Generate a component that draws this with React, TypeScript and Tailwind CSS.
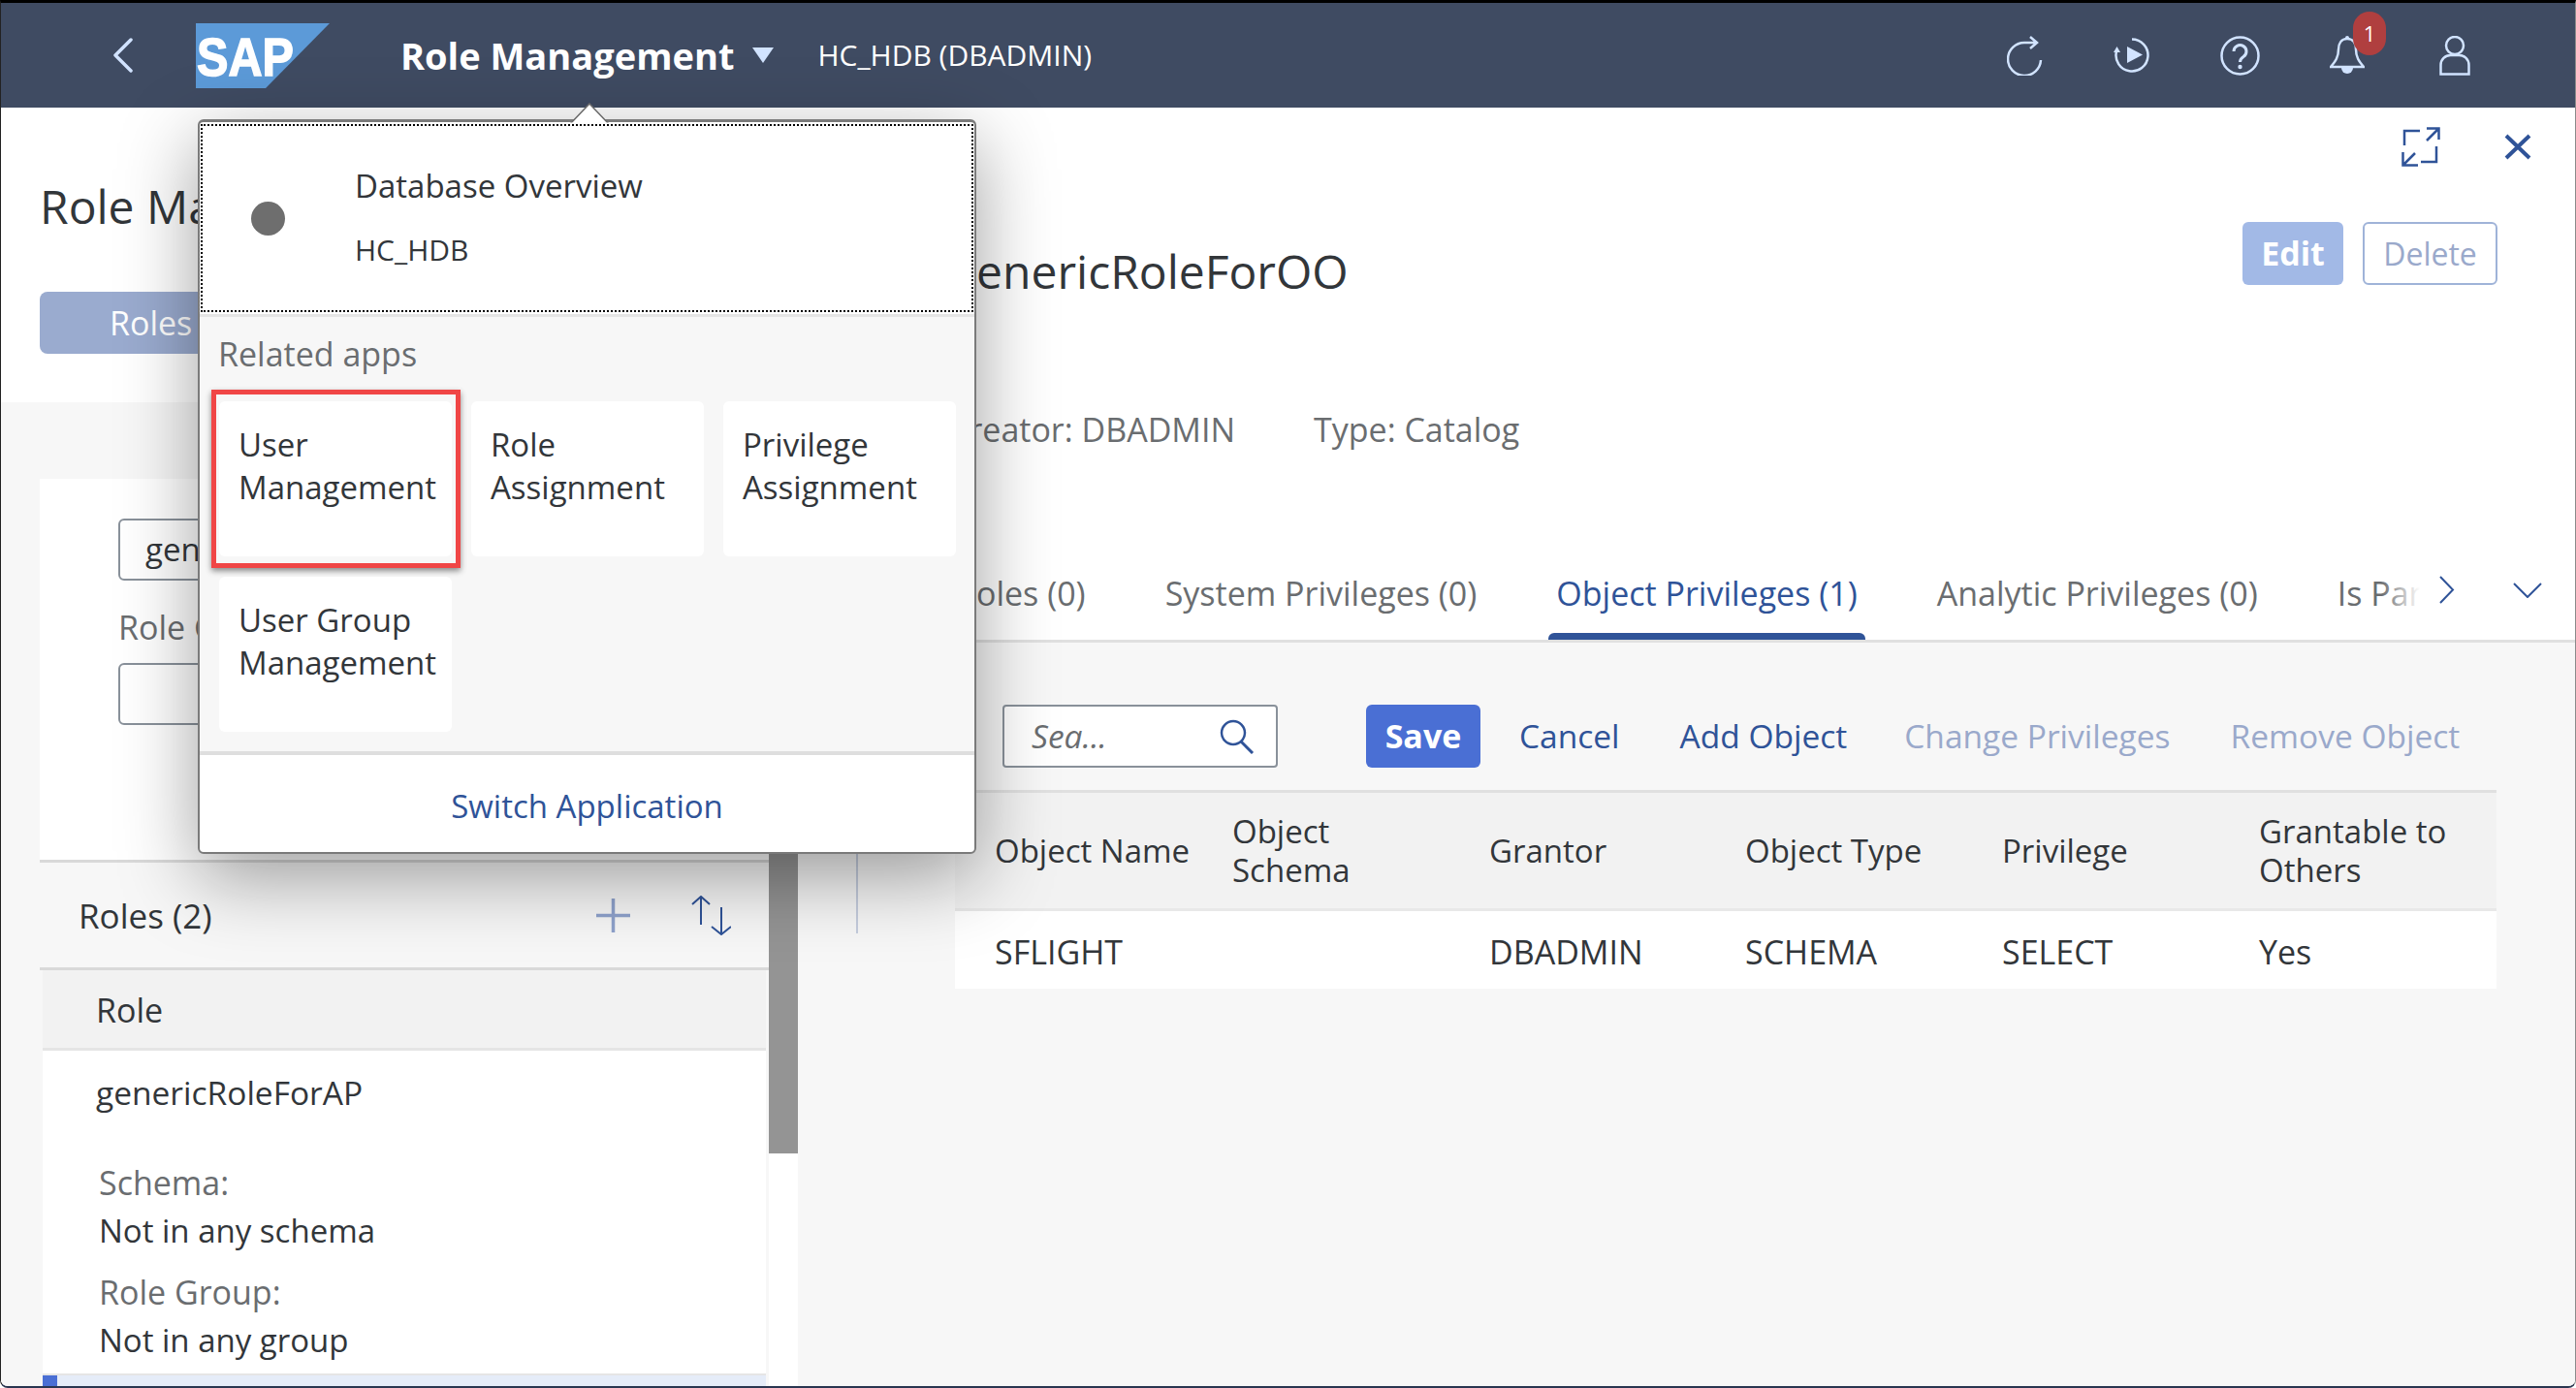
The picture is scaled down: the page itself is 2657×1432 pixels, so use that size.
const iconLight = "#d1e3ff";
const blue = "#2f5398";

const HeaderIcons = () => (
  <div className="flex items-center ml-auto mr-[108px] gap-[72px]">
    <svg width="38" height="41" viewBox="0 0 38 41" fill="none" stroke={iconLight} strokeWidth="2.5">
      <path d="M35 25A17 17 0 1 1 18 7H30M24 1l7 6-7 6" />
    </svg>
    <svg width="38" height="36" viewBox="0 0 38 36" fill="none" stroke={iconLight} strokeWidth="2.5">
      <path d="M19 1.5A16.5 16.5 0 1 1 3 14" />
      <path d="M3.500 9L0 15h7z" fill={iconLight} stroke="none" />
      <path d="M14 9l16 8.500L14 26z" fill={iconLight} stroke="none" />
    </svg>
    <svg width="41" height="41" viewBox="0 0 41 41" fill="none" stroke={iconLight} strokeWidth="2.5">
      <circle cx="20.500" cy="20.500" r="19" />
      <path d="M14 16a6.500 6.500 0 1 1 10 5.500c-2.300 1.500-3.500 2.500-3.500 5.500" strokeWidth="3" />
      <circle cx="20.500" cy="32" r="2.200" fill={iconLight} stroke="none" />
    </svg>
    <div className="relative">
      <svg width="36" height="41" viewBox="0 0 36 41" fill="none" stroke={iconLight} strokeWidth="2.500" className="block">
        <path d="M18 3c-6 0-9 5-9 11 0 8-3 12-8 18h34c-5-6-8-10-8-18 0-6-3-11-9-11z" />
        <circle cx="18" cy="2" r="2" fill={iconLight} stroke="none" />
        <path d="M12 33h12a6 6 0 0 1-12 0z" fill={iconLight} stroke="none" />
      </svg>
      <span className="absolute left-[24px] top-[-25px] flex h-[45px] w-[34px] items-center justify-center rounded-full bg-[#b03f3f] text-[22px] text-white">
        1
      </span>
    </div>
    <svg width="32" height="41" viewBox="0 0 32 41" fill="none" stroke={iconLight} strokeWidth="2.500" className="ml-[5px]">
      <circle cx="16" cy="10" r="9" />
      <path d="M1.500 39.500V30a10 10 0 0 1 10-10h9a10 10 0 0 1 10 10v9.500z" />
    </svg>
  </div>
);

const Header = () => (
  <header className="flex h-[108px] shrink-0 items-center bg-[#3f4b62] pl-[115px]">
    <svg width="22" height="36" viewBox="0 0 22 36" fill="none" stroke={iconLight} strokeWidth="3.500" strokeLinecap="round" strokeLinejoin="round">
      <path d="M19 2L3 18l16 16" />
    </svg>
    <svg width="138" height="67" viewBox="0 0 138 67" className="ml-[64px]">
      <path d="M0 0H138L72 67H0z" fill="#5c9ad8" />
      <text x="1" y="54" fontSize="56" fontWeight="700" fill="#fff" textLength="100" lengthAdjust="spacingAndGlyphs" stroke="#fff" strokeWidth="1.500" fontFamily="'Liberation Sans', sans-serif">
        SAP
      </text>
    </svg>
    <span className="ml-[73px] text-[38px] font-bold leading-none text-white">Role Management</span>
    <svg width="22" height="16" viewBox="0 0 22 16" className="ml-[19px]">
      <path d="M0 0H22L11 16z" fill={iconLight} />
    </svg>
    <span className="ml-[45px] text-[30px] leading-none text-white">HC_HDB (DBADMIN)</span>
    <HeaderIcons />
  </header>
);

const LeftColumn = () => (
  <div className="flex w-[822px] shrink-0 flex-col">
    <div className="h-[304px] shrink-0 bg-white pl-[40px]">
      <h1 className="pt-[76px] text-[48px] leading-[52px] whitespace-nowrap">Role Management</h1>
      <div className="mt-[62px] flex h-[64px] w-[300px] items-center rounded-l-lg bg-[#9aabcf] pl-[72px] text-[34px] text-white">
        Roles
      </div>
    </div>
    <div className="flex flex-1 bg-[#f7f7f7] pl-[40px] pt-[79px]">
      <div className="flex w-[752px] shrink-0 flex-col">
        <div className="h-[396px] shrink-0 border-b-[3px] border-[#d9d9d9] bg-white pl-[81px] pt-[41px]">
          <div className="flex h-[64px] w-[600px] items-center rounded-md border-2 border-[#89919a] pl-[26px] text-[33px]">
            genericRole
          </div>
          <div className="mt-[26px] h-[44px] text-[34px] leading-[44px] text-[#6a6d70]">Role Group</div>
          <div className="mt-[15px] h-[64px] w-[600px] rounded-md border-2 border-[#89919a]" />
        </div>
        <div className="flex h-[111px] shrink-0 items-center border-b-[3px] border-[#d9d9d9] pl-[40px] pr-[39px] text-[35px]">
          <span className="pt-[3px]">Roles (2)</span>
          <svg width="35" height="35" viewBox="0 0 35 35" fill="none" stroke="#8fa2cc" strokeWidth="3.500" className="ml-auto">
            <path d="M17.500 0V35M0 17.500H35" />
          </svg>
          <svg width="41" height="41" viewBox="0 0 41 41" fill="none" stroke={blue} strokeWidth="2" className="ml-[63px]">
            <path d="M10 1V30M1 9l9-8 9 8M31 12V40M21 32l10 8 10-8" />
          </svg>
        </div>
        <div className="mx-[3px] flex-1 bg-white">
          <div className="flex h-[83px] items-center border-b-[3px] border-[#e5e5e5] bg-[#f2f2f2] pl-[55px] pt-[3px] text-[34px]">
            Role
          </div>
          <div className="h-[333px] pl-[55px] pt-[21px] text-[33px] leading-[44px]">
            <div className="text-[33.5px]">genericRoleForAP</div>
            <div className="pl-[3px] pt-[49px] text-[34px] text-[#6a6d70]">Schema:</div>
            <div className="pl-[3px] pt-[6px]">Not in any schema</div>
            <div className="pl-[3px] pt-[19px] text-[34px] text-[#6a6d70]">Role Group:</div>
            <div className="pl-[3px] pt-[6px]">Not in any group</div>
          </div>
          <div className="flex h-[20px] border-t-2 border-[#e5e5e5] bg-[#e5ecf8]">
            <div className="w-[15px] bg-[#4a6fd4]" />
          </div>
        </div>
      </div>
      <div className="w-[30px] shrink-0 bg-white">
        <div className="h-[696px] bg-[#949494]" />
      </div>
    </div>
  </div>
);

const Splitter = () => (
  <div className="flex w-[141px] shrink-0 flex-col">
    <div className="h-[304px] bg-white" />
    <div className="flex-1 bg-[#f7f7f7] pl-[60px]">
      <div className="h-[548px] w-[2px] bg-[#c5cdde]" />
    </div>
  </div>
);

const Tab = ({ label, active }: { label: string; active?: boolean }) => (
  <div className="flex h-full flex-col items-stretch whitespace-nowrap">
    <div className={`flex flex-1 items-center px-[8px] pt-[6px] ${active ? "text-[#2f5398]" : "text-[#6a6d70]"}`}>{label}</div>
    <div className={`h-[7px] rounded-t-md ${active ? "bg-[#2f5398]" : ""}`} />
  </div>
);

const RightHeader = () => (
  <div className="flex h-[552px] shrink-0 flex-col bg-white pl-[17px]">
    <div className="flex h-[118px] shrink-0 items-start justify-end pr-[45px] pt-[20px]">
      <svg width="40" height="41" viewBox="0 0 40 41" fill="none" stroke={blue} strokeWidth="2.500">
        <path d="M3 19V4h16M26 14L38 2M26 1.500h12.500V13M36 20v16H20M14 27L2 39M1.500 26v13.500H17" />
      </svg>
      <svg width="28" height="27" viewBox="0 0 28 27" fill="none" stroke={blue} strokeWidth="4" className="ml-[66px] mt-[7px]">
        <path d="M2 2l24 23M26 2L2 25" />
      </svg>
    </div>
    <div className="flex h-[65px] shrink-0 items-start pr-[80px]">
      <div className="mt-[18px] text-[48px] leading-[66px] whitespace-nowrap">genericRoleForOO</div>
      <button className="ml-auto flex h-[65px] w-[104px] items-center justify-center rounded-md bg-[#a2b9e6] text-[34px] font-bold text-white">
        Edit
      </button>
      <button className="ml-[20px] flex h-[65px] w-[139px] items-center justify-center rounded-md border-2 border-[#9fb3d8] text-[32px] text-[#9aa9cb]">
        Delete
      </button>
    </div>
    <div className="mt-[126px] -ml-[3px] flex h-[46px] shrink-0 items-center text-[34px] text-[#6a6d70]">
      <span>Creator: DBADMIN</span>
      <span className="ml-[81px]">Type: Catalog</span>
    </div>
    <div className="mt-[99px] flex h-[98px] shrink-0 items-stretch overflow-hidden border-b-[3px] border-[#e0e0e0] text-[34px]">
      <div className="relative -ml-[3px] flex w-[1518px] shrink-0 gap-[66px] overflow-hidden">
        <Tab label="Roles (0)" />
        <Tab label="System Privileges (0)" />
        <Tab label="Object Privileges (1)" active />
        <Tab label="Analytic Privileges (0)" />
        <Tab label="Is Part Of" />
        <div className="absolute right-0 top-0 h-[90px] w-[40px] bg-gradient-to-r from-transparent to-white" />
      </div>
      <div className="flex items-center pb-[8px]">
        <svg width="16" height="29" viewBox="0 0 16 29" fill="none" stroke={blue} strokeWidth="2" className="ml-[20px]">
          <path d="M1 1l13 13.500L1 28" />
        </svg>
        <svg width="30" height="16" viewBox="0 0 30 16" fill="none" stroke={blue} strokeWidth="2" className="ml-[60px]">
          <path d="M1 1l14 14L29 1" />
        </svg>
      </div>
    </div>
  </div>
);

const headers = ["Object Name", "Object Schema", "Grantor", "Object Type", "Privilege", "Grantable to Others"];
const cells = ["SFLIGHT", "", "DBADMIN", "SCHEMA", "SELECT", "Yes"];

const ObjectTable = () => (
  <div className="mt-[23px]">
    <div className="ml-[21px] w-[1590px] border-t-[3px] border-[#e0e0e0] bg-[#f2f2f2]">
      <div className="grid h-[122px] grid-cols-[245px_265px_264px_265px_265px_1fr] items-center border-b-[3px] border-[#e8e8e8] pl-[41px] text-[33px] leading-[40px]">
        {headers.map((h) => (
          <div key={h} className={h === "Object Name" ? "whitespace-nowrap" : h === "Object Schema" ? "max-w-[150px]" : "max-w-[225px]"}>
            {h}
          </div>
        ))}
      </div>
      <div className="grid h-[80px] grid-cols-[245px_265px_264px_265px_265px_1fr] items-center bg-white pl-[41px] pt-[4px] text-[34px]">
        {cells.map((c, i) => (
          <div key={i}>{c}</div>
        ))}
      </div>
    </div>
  </div>
);

const Toolbar = () => (
  <div className="ml-[70px] mt-[64px] flex h-[65px] items-center text-[33.5px]">
    <div className="flex h-full w-[284px] items-center justify-between rounded-sm border-2 border-[#89919a] bg-white pl-[28px] pr-[22px] italic text-[#6a6d70]">
      Sea...
      <svg width="36" height="36" viewBox="0 0 36 36" fill="none" stroke={blue} strokeWidth="2.500">
        <circle cx="14" cy="14" r="12" />
        <path d="M22 23l12 12" strokeWidth="3" />
      </svg>
    </div>
    <button className="ml-[91px] flex h-full w-[118px] items-center justify-center rounded-md bg-[#4a6fd4] text-[34px] font-bold text-white">
      Save
    </button>
    <span className="ml-[40px] text-[#2f5398]">Cancel</span>
    <span className="ml-[62px] text-[#2f5398]">Add Object</span>
    <span className="ml-[59px] text-[#9aa9cb]">Change Privileges</span>
    <span className="ml-[62px] text-[#9aa9cb]">Remove Object</span>
  </div>
);

const RightColumn = () => (
  <div className="flex min-w-0 flex-1 flex-col bg-[#f7f7f7]">
    <RightHeader />
    <Toolbar />
    <ObjectTable />
  </div>
);

const AppTile = ({ lines, marked }: { lines: string[]; marked?: boolean }) => (
  <div className="relative h-[160px] rounded-md bg-white px-[20px] pt-[23px] text-[33px] leading-[44px]">
    {lines.map((l) => (
      <div key={l}>{l}</div>
    ))}
    {marked && (
      <div className="absolute -bottom-[12px] -left-[8px] -right-[9px] -top-[12px] border-[5px] border-[#f04646] shadow-[0_3px_6px_rgba(0,0,0,0.45)]" />
    )}
  </div>
);

const Popover = () => (
  <div className="absolute left-[203px] top-[120px] w-[803px] rounded-md border-2 border-t-[3px] border-[#7a7a7a] bg-white shadow-[0_24px_80px_rgba(0,0,0,0.38)]">
    <svg width="42" height="22" viewBox="0 0 42 22" className="absolute left-[381px] top-[-20px]">
      <path d="M1 22L21 1l20 21z" fill="#fff" stroke="#6a6a6a" strokeWidth="1.500" />
      <path d="M0 22h42" stroke="#fff" strokeWidth="3" />
    </svg>
    <div className="mx-[1px] mt-[2px] flex h-[194px] items-center border-2 border-dotted border-black pl-[50px]">
      <div className="h-[35px] w-[35px] rounded-full bg-[#6e6e6e]" />
      <div className="ml-[72px] flex flex-col">
        <span className="text-[33px] leading-[44px]">Database Overview</span>
        <span className="mt-[22px] text-[30px] leading-[44px]">HC_HDB</span>
      </div>
    </div>
    <div className="mt-[2px] border-t-[3px] border-[#e5e5e5] bg-[#f7f7f7]">
      <div className="pl-[19px] pt-[16px] text-[34px] leading-[44px] text-[#6a6d70]">Related apps</div>
      <div className="grid grid-cols-[240px_240px_240px] gap-x-[20px] gap-y-[21px] pb-[20px] pl-[20px] pt-[27px]">
        <AppTile lines={["User", "Management"]} marked />
        <AppTile lines={["Role", "Assignment"]} />
        <AppTile lines={["Privilege", "Assignment"]} />
        <AppTile lines={["User Group", "Management"]} />
      </div>
    </div>
    <div className="flex h-[104px] items-center justify-center rounded-b-md border-t-[4px] border-[#dedede] bg-white pt-[6px] text-[33px] text-[#2f5398]">
      Switch Application
    </div>
  </div>
);

export default function App() {
  return (
    <div className="relative flex h-[1432px] flex-col overflow-hidden rounded-b-lg border-b-2 border-l border-r border-t-[3px] border-b-[#2a3650] border-l-[#222] border-r-[#8a8a8a] border-t-black bg-white font-['Open_Sans',sans-serif] text-[#32363a]">
      <Header />
      <div className="flex min-h-0 flex-1">
        <LeftColumn />
        <Splitter />
        <RightColumn />
      </div>
      <Popover />
    </div>
  );
}
